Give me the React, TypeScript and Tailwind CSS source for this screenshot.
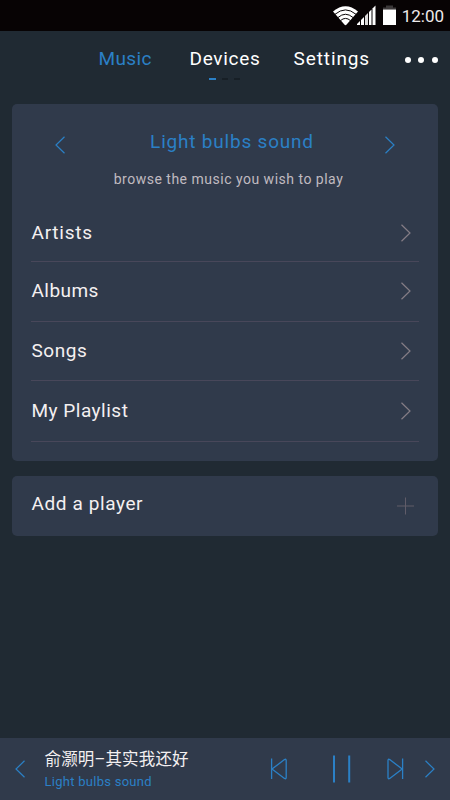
import React from 'react'

const chevrons = {
  left: 'M9.5 .8 L1 9 L9.5 17.2',
  right: 'M.5 .8 L9 9 L.5 17.2',
}

function Chevron({ dir, className }: { dir: 'left' | 'right'; className?: string }) {
  return (
    <svg viewBox="0 0 10 18" className={`h-[18px] w-[10px] shrink-0 ${className ?? ''}`} fill="none" stroke="currentColor" strokeWidth="1.2">
      <path d={chevrons[dir]} />
    </svg>
  )
}

const rows = [
  { label: 'Artists', size: 'h-[58px]', text: 'tracking-[0.75px]' },
  { label: 'Albums', size: 'h-[60px] pb-[2px]', text: 'tracking-[0.45px]' },
  { label: 'Songs', size: 'h-[59px]', text: 'tracking-[0.55px]' },
  { label: 'My Playlist', size: 'h-[61px]', text: 'tracking-[0.5px]' },
]

function StatusBar() {
  return (
    <div className="flex h-[31px] items-center justify-end bg-[#070304] pr-[6px] text-[#eeeaea]">
      <svg viewBox="0 0 64 22" className="h-[22px] w-[64px]">
        {/* wifi */}
        <path d="M0 6.5 Q12.5 -4 25 6.5 L13.6 19.6 Q12.5 20.8 11.4 19.6 Z" fill="#fff" />
        <g fill="none" stroke="#070304" strokeWidth="1">
          <path d="M2 9.3 Q12.5 .5 23 9.3" />
          <path d="M5 12.5 Q12.5 6 20 12.5" />
          <path d="M7.5 15.6 Q12.5 11.2 17.5 15.6" />
        </g>
        {/* signal */}
        <g fill="#fff">
          <path d="M24 20 V19 L27 16 V20 Z" />
          <path d="M28 20 V15 L31 12 V20 Z" />
          <path d="M32 20 V11 L35 8 V20 Z" opacity=".85" />
          <path d="M36 20 V7 L38.5 4.5 V20 Z" />
          <path d="M39.5 20 V3.5 L42.5 .5 V20 Z" />
        </g>
        {/* battery */}
        <path d="M53 .5 h7 v2 h3 v2 h-13 v-2 h3 Z" fill="#3b3839" />
        <path d="M50 4.5 h13 V20 h-13 Z" fill="#fff" />
      </svg>
      <span className="ml-[5px] pt-px text-[17px] leading-[31px]">12:00</span>
    </div>
  )
}

function Tabs() {
  return (
    <nav className="flex h-[73px] pl-[98.5px] text-[19px] leading-[24px] text-white">
      <span className="mt-[16px] w-[91px] tracking-[0.4px] text-[#2b80c6]">Music</span>
      <div className="mt-[16px] w-[104px]">
        <div className="tracking-[0.7px]">Devices</div>
        <div className="mt-[7px] ml-[19.5px] flex gap-[6px]">
          <i className="h-[2px] w-[7px] bg-[#2b80c6]" />
          <i className="h-[2px] w-[6px] bg-[#171f26]" />
          <i className="h-[2px] w-[6px] bg-[#171f26]" />
        </div>
      </div>
      <span className="mt-[16px] w-[111px] tracking-[0.9px]">Settings</span>
      <div className="mt-[26px] flex gap-[7.5px]">
        <i className="size-[6px] rounded-full bg-white" />
        <i className="size-[6px] rounded-full bg-white" />
        <i className="size-[6px] rounded-full bg-white" />
      </div>
    </nav>
  )
}

function PlayerBar() {
  return (
    <footer className="flex h-[62px] items-center bg-[#303a4b] pl-[15px] text-[#2b80c6]">
      <Chevron dir="left" />
      <div className="ml-[19.5px] w-[225.5px] pt-[3px]">
        <div className="text-[16.5px] leading-[22px] tracking-[0.15px] whitespace-nowrap text-[#f4f0f1]">俞灏明–其实我还好</div>
        <div className="text-[13px] leading-[21px] tracking-[0.27px] whitespace-nowrap">Light bulbs sound</div>
      </div>
      <svg viewBox="0 0 140 28" className="h-[28px] w-[140px]" fill="none" stroke="currentColor" strokeWidth="1.3" strokeLinejoin="round">
        <path d="M1.6 3.5 V24" />
        <path d="M2 14 L14.5 4.6 Q16.2 3.6 16.2 5.5 V22.5 Q16.2 24.4 14.5 23.4 Z" />
        <path d="M64 .5 V27.5 M79.2 .5 V27.5" strokeWidth="2" />
        <path d="M132.6 3.5 V24" />
        <path d="M132.2 14 L119.7 4.6 Q118 3.6 118 5.5 V22.5 Q118 24.4 119.7 23.4 Z" />
      </svg>
      <Chevron dir="right" className="ml-[15px]" />
    </footer>
  )
}

export default function App() {
  return (
    <div className="flex h-[800px] w-[450px] flex-col overflow-hidden bg-[#202a33] font-[Roboto,'Noto_Sans_CJK_SC',sans-serif]">
      <StatusBar />
      <Tabs />

      <main className="flex flex-1 flex-col gap-[15px] px-[12px]">
        <section className="h-[357px] rounded-[5px] bg-[#303a4b] px-[19px]">
          <div className="h-[100px] pt-[26px] text-center">
            <div className="flex items-center justify-between px-[24px] text-[#2b80c6]">
              <Chevron dir="left" className="mt-[5px]" />
              <h1 className="pl-[14px] text-[19px] leading-[24px] tracking-[0.8px]">Light bulbs sound</h1>
              <Chevron dir="right" className="mt-[5px]" />
            </div>
            <p className="mt-[15px] pl-[7px] text-[14px] leading-[20px] tracking-[0.5px] text-[#c0bbc0]">browse the music you wish to play</p>
          </div>
          {rows.map((row) => (
            <div key={row.label} className={`flex items-center justify-between border-b border-[#48475a] pr-[8px] pl-[0.5px] ${row.size}`}>
              <span className={`text-[19px] leading-[24px] text-[#f4f0f1] ${row.text}`}>{row.label}</span>
              <Chevron dir="right" className="text-[#857d86]" />
            </div>
          ))}
        </section>

        <section className="flex h-[60px] justify-between rounded-[5px] bg-[#303a4b] pr-[23px] pl-[19.5px]">
          <span className="mt-[16px] text-[19px] leading-[24px] tracking-[0.6px] text-[#f4f0f1]">Add a player</span>
          <svg viewBox="0 0 18 18" className="mt-[21px] size-[18px]" fill="none" stroke="#605c69">
            <path d="M8.5 .5 V17.5 M0 9 H17" />
          </svg>
        </section>
      </main>

      <PlayerBar />
    </div>
  )
}
